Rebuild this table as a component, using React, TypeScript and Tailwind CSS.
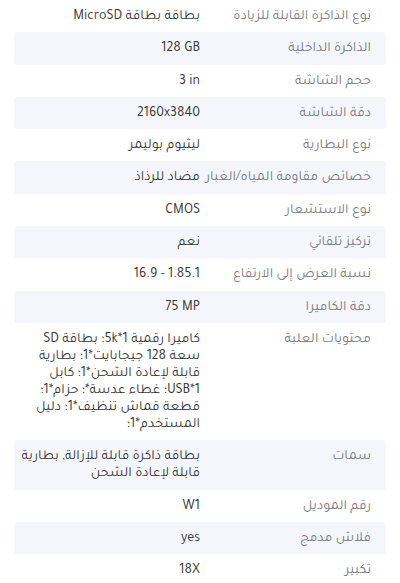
import React from "react";

type Row = { label: string; value: React.ReactNode; ltr?: boolean };

const rows: Row[] = [
  { label: "نوع الذاكرة القابلة للزيادة", value: "بطاقة بطاقة MicroSD" },
  { label: "الذاكرة الداخلية", value: "128 GB", ltr: true },
  { label: "حجم الشاشة", value: "3 in", ltr: true },
  { label: "دقة الشاشة", value: "2160x3840", ltr: true },
  { label: "نوع البطارية", value: "ليثيوم بوليمر" },
  { label: "خصائص مقاومة المياه/الغبار", value: "مضاد للرذاذ" },
  { label: "نوع الاستشعار", value: "CMOS", ltr: true },
  { label: "تركيز تلقائي", value: "نعم" },
  { label: "نسبة العرض إلى الارتفاع", value: "16.9 - 1.85.1", ltr: true },
  { label: "دقة الكاميرا", value: "75 MP", ltr: true },
  {
    label: "محتويات العلبة",
    value: (
      <>
        <span className="block whitespace-nowrap">كاميرا رقمية 1*5k؛ بطاقة SD</span>
        <span className="block whitespace-nowrap">سعة 128 جيجابايت*1؛ بطارية</span>
        <span className="block whitespace-nowrap">قابلة لإعادة الشحن*1؛ كابل</span>
        <span className="block whitespace-nowrap">USB*1؛ غطاء عدسة*؛ حزام*1؛</span>
        <span className="block whitespace-nowrap">قطعة قماش تنظيف*1؛ دليل</span>
        <span className="block whitespace-nowrap">المستخدم*1؛</span>
      </>
    ),
  },
  {
    label: "سمات",
    value: (
      <>
        <span className="block whitespace-nowrap">بطاقة ذاكرة قابلة للإزالة, بطارية</span>
        <span className="block whitespace-nowrap">قابلة لإعادة الشحن</span>
      </>
    ),
  },
  { label: "رقم الموديل", value: "W1", ltr: true },
  { label: "فلاش مدمج", value: "yes", ltr: true },
  { label: "تكبير", value: "18X", ltr: true },
];

export default function App() {
  return (
    <div
      dir="rtl"
      className="w-[400px] h-[583px] overflow-hidden bg-white px-[14px] font-['Tajawal','Noto_Sans_Arabic',sans-serif]"
    >
      {rows.map((r, i) => (
        <div
          key={i}
          className={
            i % 2 === 1
              ? "grid grid-cols-2 px-[15px] pt-[9px] pb-[6.3px] rounded-[4px] text-[14px] leading-[17px] bg-[#f4f6fc]"
              : "grid grid-cols-2 px-[15px] pt-[9px] pb-[6.3px] rounded-[4px] text-[14px] leading-[17px] bg-white"
          }
        >
          <div className="text-[#7a7a84]">{r.label}</div>
          <div className="text-[#363636] text-right">
            {r.ltr ? <span dir="ltr">{r.value}</span> : r.value}
          </div>
        </div>
      ))}
    </div>
  );
}
